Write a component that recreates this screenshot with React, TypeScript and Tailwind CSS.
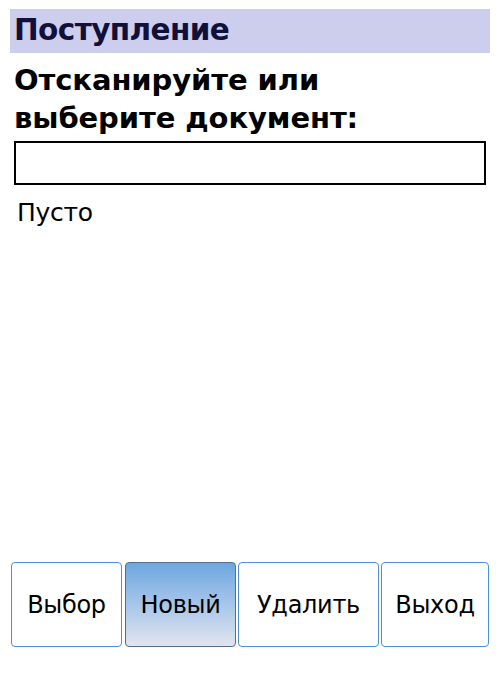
import React from "react";

const buttons = [
  { label: "Выбор", cls: "w-[111px]", active: false },
  { label: "Новый", cls: "w-[111px] ml-[3px]", active: true },
  { label: "Удалить", cls: "w-[141px] ml-[2px]", active: false },
  { label: "Выход", cls: "w-[108px] ml-[2px]", active: false },
];

export default function App() {
  return (
    <div
      className="flex flex-col w-[496px] h-[677px] bg-white text-black overflow-hidden"
      style={{ fontFamily: '"DejaVu Sans", "Liberation Sans", sans-serif' }}
    >
      {/* Title bar */}
      <div className="ml-[10px] mr-[6px] mt-[9px] h-[44px] bg-[#cdcdee] flex items-center pl-[4px]">
        <h1 className="text-[29.5px] font-bold text-[#10103a] leading-none tracking-[-0.6px]">
          Поступление
        </h1>
      </div>

      {/* Prompt */}
      <div className="pl-[14px] pr-[10px] pt-[8px]">
        <p className="text-[29px] font-bold leading-[38px] tracking-[-0.1px]">
          Отсканируйте или
          <br />
          выберите документ:
        </p>
        <div className="mt-[4px] h-[44px] border-2 border-black"></div>
        <p className="mt-[13px] pl-[3px] text-[25px] leading-[30px] tracking-[-0.3px]">Пусто</p>
      </div>

      <div className="flex-1"></div>

      {/* Bottom buttons */}
      <div className="flex pl-[11px] pb-[30px]">
        {buttons.map((b) => (
          <div
            key={b.label}
            className={
              b.active
                ? `${b.cls} h-[85px] flex items-center justify-center rounded-[4px] border border-[#52708e] bg-gradient-to-b from-[#6ea6e0] via-[#a6c6ea] to-[#e2e4ee]`
                : `${b.cls} h-[85px] flex items-center justify-center rounded-[4px] border border-[#4b92d4] bg-white`
            }
          >
            <span className="text-[24px] tracking-[-0.3px]">{b.label}</span>
          </div>
        ))}
      </div>
    </div>
  );
}
